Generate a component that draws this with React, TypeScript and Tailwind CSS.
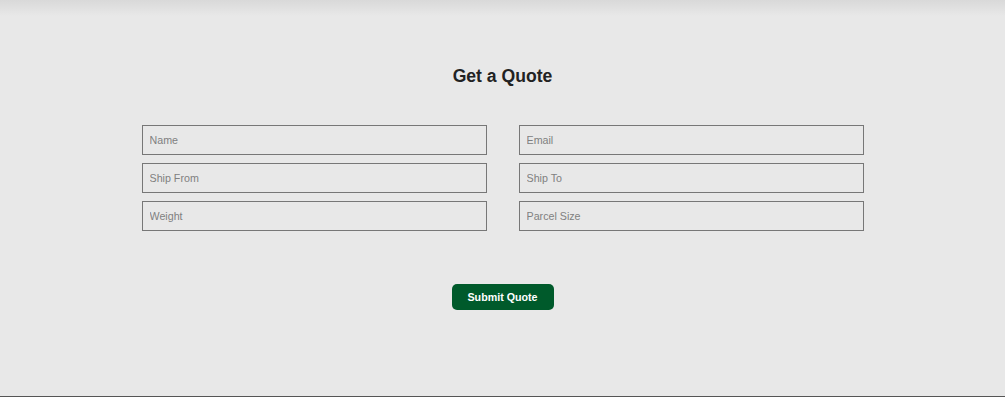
export default function App() {
  const fields = ["Name", "Email", "Ship From", "Ship To", "Weight", "Parcel Size"];
  return (
    <div className="relative h-[397px] w-full overflow-hidden bg-[#e8e8e8] font-['Liberation_Sans',Arial,sans-serif]">
      <div className="pointer-events-none absolute inset-x-0 top-0 h-[16px] bg-gradient-to-b from-[#d9d9d9] to-[#e8e8e8]" />
      <div className="relative flex flex-col items-center pt-[65px]">
        <h2 className="text-[17.6px] font-bold leading-[22px] text-[#222]">Get a Quote</h2>
        <form className="mt-[38px] grid w-[722px] grid-cols-2 gap-x-[32px] gap-y-[8px]">
          {fields.map((f) => (
            <input
              key={f}
              placeholder={f}
              className="h-[30px] border border-[#777] bg-transparent px-[7px] text-[10.7px] text-[#333] outline-none placeholder:text-[#808080]"
            />
          ))}
        </form>
        <button
          type="button"
          className="mt-[53px] h-[26px] w-[102px] rounded-[5px] bg-[#005a2b] text-[10.7px] font-bold text-white"
        >
          Submit Quote
        </button>
      </div>
      <div className="absolute inset-x-0 bottom-0 h-px bg-[#555]" />
    </div>
  );
}
